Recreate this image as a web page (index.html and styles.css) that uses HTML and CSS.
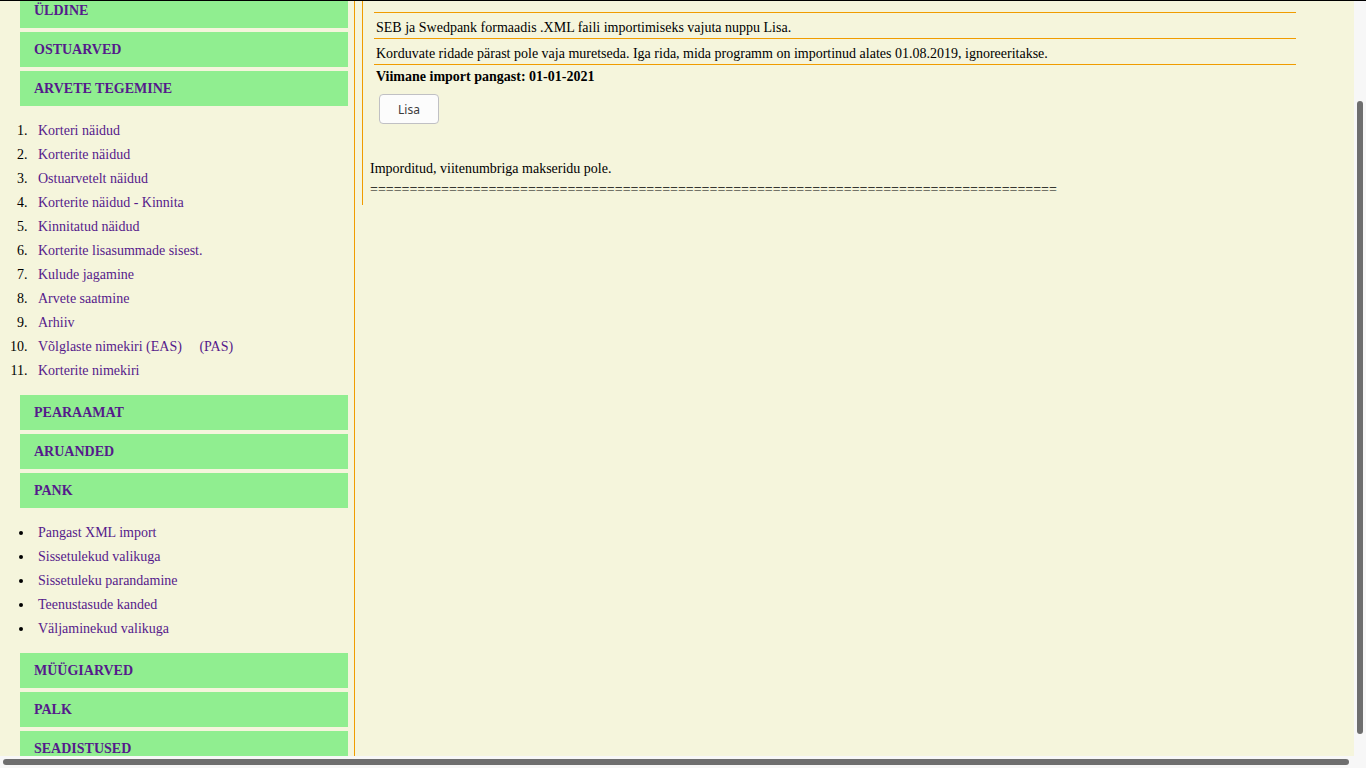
FILE: index.html
```html
<!DOCTYPE html>
<html lang="et">

<head>
    <meta charset="UTF-8">
    <meta name="viewport" content="width=device-width, initial-scale=1.0">
    <title>Pangast XML import</title>
    <link rel="stylesheet" href="styles.css">
</head>

<body>
    <div class="window">
        <div class="page">
            <nav class="sidebar">
                <a class="menu-title" href="#">ÜLDINE</a>
                <a class="menu-title" href="#">OSTUARVED</a>
                <a class="menu-title" href="#">ARVETE TEGEMINE</a>
                <ol class="menu-list">
                    <li><a href="#">Korteri näidud</a></li>
                    <li><a href="#">Korterite näidud</a></li>
                    <li><a href="#">Ostuarvetelt näidud</a></li>
                    <li><a href="#">Korterite näidud - Kinnita</a></li>
                    <li><a href="#">Kinnitatud näidud</a></li>
                    <li><a href="#">Korterite lisasummade sisest.</a></li>
                    <li><a href="#">Kulude jagamine</a></li>
                    <li><a href="#">Arvete saatmine</a></li>
                    <li><a href="#">Arhiiv</a></li>
                    <li><a href="#">Võlglaste nimekiri (EAS)</a> <a class="second-link" href="#">(PAS)</a></li>
                    <li><a href="#">Korterite nimekiri</a></li>
                </ol>
                <a class="menu-title" href="#">PEARAAMAT</a>
                <a class="menu-title" href="#">ARUANDED</a>
                <a class="menu-title" href="#">PANK</a>
                <ul class="menu-list bullets">
                    <li><a href="#">Pangast XML import</a></li>
                    <li><a href="#">Sissetulekud valikuga</a></li>
                    <li><a href="#">Sissetuleku parandamine</a></li>
                    <li><a href="#">Teenustasude kanded</a></li>
                    <li><a href="#">Väljaminekud valikuga</a></li>
                </ul>
                <a class="menu-title" href="#">MÜÜGIARVED</a>
                <a class="menu-title" href="#">PALK</a>
                <a class="menu-title" href="#">SEADISTUSED</a>
            </nav>

            <main class="content">
                <div class="notes">
                    <p class="note">SEB ja Swedpank formaadis .XML faili importimiseks vajuta nuppu Lisa.</p>
                    <p class="note">Korduvate ridade pärast pole vaja muretseda. Iga rida, mida programm on importinud alates 01.08.2019, ignoreeritakse.</p>
                    <p class="last-import">Viimane import pangast: 01-01-2021</p>
                    <button class="add-button" type="button">Lisa</button>
                </div>
                <p class="result">Imporditud, viitenumbriga makseridu pole.</p>
                <p class="result">=======================================================================================</p>
            </main>
        </div>
        <div class="scroll-v"><div class="thumb-v"></div></div>
        <div class="scroll-h"><div class="thumb-h"></div></div>
    </div>
</body>

</html>
```
FILE: styles.css
```css
* {
    box-sizing: border-box;
}

body {
    font-family: "Liberation Serif", "Times New Roman", serif;
    font-size: 14px;
    color: #000;
    background-color: #f7f7f7;
    margin: 0;
}

.window {
    display: grid;
    grid-template-columns: 1fr 12px;
    grid-template-rows: 1fr 12px;
    height: 100vh;
    border-top: 1px solid #000;
    overflow: hidden;
}

.page {
    display: flex;
    align-items: flex-start;
    min-height: 0;
    background-color: beige;
    overflow: hidden;
}

a {
    color: #551a8b;
    text-decoration: none;
}

p {
    margin: 0;
}

/* left menu */
.sidebar {
    width: 355px;
    flex-shrink: 0;
    margin-top: -8px;
    border-right: 1px solid #f09c00;
}

.menu-title {
    display: block;
    height: 35px;
    margin: 0 6px 4px 20px;
    padding-left: 14px;
    line-height: 35px;
    font-weight: bold;
    background-color: lightgreen;
}

.menu-list {
    margin: 13px 0 12px;
    padding-left: 31px;
    line-height: 24px;
}

.menu-list li {
    padding-left: 7px;
}

.bullets {
    padding-left: 34px;
}

.bullets li {
    padding-left: 4px;
}

.second-link {
    margin-left: 14px;
}

/* right side */
.content {
    flex: 1;
    margin-left: 7px;
    padding: 11px 0 5px 7px;
    border-left: 1px solid #f09c00;
}

.notes {
    margin: 0 58px 34px 4px;
    border-top: 1px solid #f09c00;
}

.note {
    padding: 5px 0 0 2px;
    line-height: 20px;
    border-bottom: 1px solid #f09c00;
}

.last-import {
    padding-left: 2px;
    line-height: 24px;
    font-weight: bold;
}

.add-button {
    display: block;
    width: 60px;
    height: 30px;
    margin: 5px 0 0 5px;
    padding: 0;
    font-family: "Noto Sans", sans-serif;
    font-size: 12px;
    color: #3b3b3b;
    background-color: #fcfcfc;
    border: 1px solid #c0c0c4;
    border-radius: 4px;
}

.result {
    line-height: 21px;
}

/* scrollbars */
.scroll-v {
    display: flex;
    padding: 100px 3px 22px;
}

.thumb-v {
    width: 6px;
    background-color: #6e6e6e;
    border-radius: 3px;
}

.scroll-h {
    padding: 3px 5px 0 3px;
}

.thumb-h {
    height: 6px;
    background-color: #6e6e6e;
    border-radius: 3px;
}
```
